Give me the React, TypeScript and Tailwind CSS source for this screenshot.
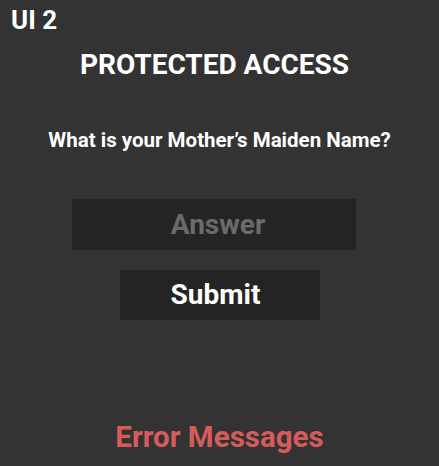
export default function App() {
  return (
    <div
      className="w-[439px] h-[466px] bg-[#333333] text-white flex flex-col overflow-hidden"
      style={{ fontFamily: 'Roboto, "Liberation Sans", sans-serif' }}
    >
      <div className="pl-[11px] pt-[6px] text-[26px] font-bold leading-[28px]">UI 2</div>

      <div className="flex flex-col items-center">
        <h1 className="mt-[15px] ml-[-10px] text-[28px] font-bold leading-[32px]">PROTECTED ACCESS</h1>

        <p className="mt-[47px] text-[20.5px] font-bold leading-[24px]">
          What is your Mother’s Maiden Name?
        </p>

        <input
          placeholder="Answer"
          className="mt-[47px] self-start ml-[72px] w-[284px] h-[51px] bg-[#242424] pl-[8px] text-center text-[28px] font-bold text-white placeholder:text-[#6b6b6b] outline-none"
        />

        <button className="mt-[20px] w-[200px] h-[50px] bg-[#242424] pr-[8px] text-[28px] font-bold text-white">
          Submit
        </button>

        <div className="mt-[100px] text-[29.5px] font-bold leading-[34px] text-[#d65c5c]">
          Error Messages
        </div>
      </div>
    </div>
  );
}
